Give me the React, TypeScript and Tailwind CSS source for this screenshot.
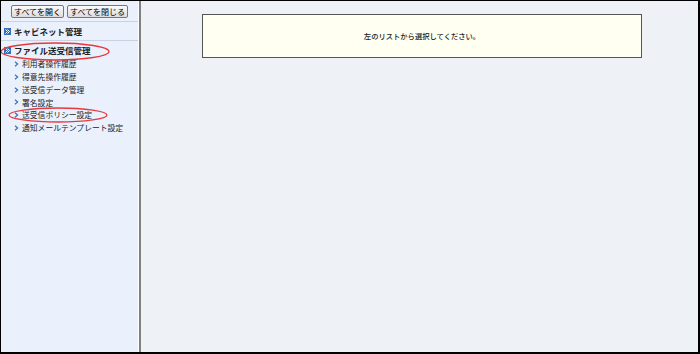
import React from 'react';

const font = { fontFamily: '"Noto Sans CJK JP", "Noto Sans", sans-serif' };

const subItems = [
  '利用者操作履歴',
  '得意先操作履歴',
  '送受信データ管理',
  '署名設定',
  '送受信ポリシー設定',
  '通知メールテンプレート設定',
];

const FolderIcon: React.FC = () => (
  <svg width="7" height="7" viewBox="0 0 7 7" className="shrink-0">
    <rect x="0" y="0" width="7" height="7" fill="#2f6fb8" />
    <path d="M1.5 1.5 L3.5 3.5 L1.5 5.5 M3.5 1.5 L5.5 3.5 L3.5 5.5" stroke="#ffffff" strokeWidth="1" fill="none" />
  </svg>
);

const Chevron: React.FC = () => (
  <svg width="5" height="6" viewBox="0 0 5 6" className="shrink-0">
    <path d="M1 0.8 L3.6 3 L1 5.2" stroke="#3b6fb0" strokeWidth="1.2" fill="none" />
  </svg>
);

export default function App() {
  return (
    <div
      className="w-[700px] h-[354px] flex border-t border-l border-r-2 border-b-2 border-black bg-[#eef2f6] text-[#222]"
      style={font}
    >
      {/* Sidebar */}
      <div className="relative w-[137px] shrink-0 bg-[#eaf1fd] flex flex-col">
        <div className="flex gap-[3px] pl-[10px] pt-[4px] pb-[3px] border-b border-[#c9d3df]">
          <button className="h-[13px] px-[2px] text-[8px] leading-[11px] border border-[#777] rounded-[2px] bg-gradient-to-b from-[#fbfbfb] to-[#dcdcdc] text-black">
            すべてを開く
          </button>
          <button className="h-[13px] px-[2px] text-[8px] leading-[11px] border border-[#777] rounded-[2px] bg-gradient-to-b from-[#fbfbfb] to-[#dcdcdc] text-black">
            すべてを閉じる
          </button>
        </div>

        <div className="flex items-center gap-[3px] pl-[3px] h-[19px] border-b border-[#c9d3df]">
          <FolderIcon />
          <span className="text-[8.5px] font-bold leading-none">キャビネット管理</span>
        </div>

        <div className="flex items-center gap-[3px] pl-[3px] h-[17px] mt-[1px]">
          <FolderIcon />
          <span className="text-[8.5px] font-bold leading-none">ファイル送受信管理</span>
        </div>

        <div className="flex flex-col -mt-[1px]">
          {subItems.map((item) => (
            <div key={item} className="flex items-center gap-[3px] pl-[13px] h-[12.7px]">
              <Chevron />
              <span className="text-[7.8px] leading-none">{item}</span>
            </div>
          ))}
        </div>

        {/* Red annotation ellipses */}
        <svg className="absolute left-0 top-0 pointer-events-none" width="137" height="130">
          <ellipse cx="54" cy="50.5" rx="54" ry="8.5" fill="none" stroke="#e8383d" strokeWidth="1.3" />
          <ellipse cx="57" cy="114" rx="49" ry="7" fill="none" stroke="#e8383d" strokeWidth="1.3" />
        </svg>
      </div>

      {/* Divider */}
      <div className="w-px bg-white shrink-0" />
      <div className="w-[2px] bg-[#808080] shrink-0" />

      {/* Main */}
      <div className="flex-1 pt-[13px] pl-[61px]">
        <div className="w-[440px] h-[44px] bg-[#fffff2] border border-[#555] flex items-center justify-center">
          <span className="text-[7.3px] font-medium leading-none mt-[1px]">左のリストから選択してください。</span>
        </div>
      </div>
    </div>
  );
}
